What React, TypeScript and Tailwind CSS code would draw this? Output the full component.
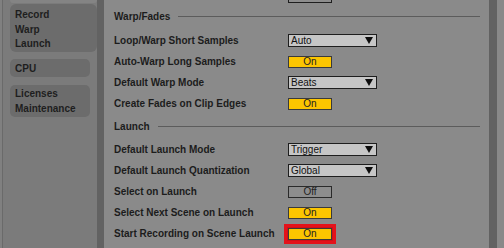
import React from 'react';

const font = { fontFamily: '"Liberation Sans", Arial, sans-serif' };

function Dropdown({ value }: { value: string }) {
  return (
    <div className="w-[89px] h-[13px] bg-[#c6c6c6] border border-[#1e1e1e] flex items-center justify-between pl-[2px] pr-[3px] text-[10px] leading-none text-[#111]">
      <span>{value}</span>
      <svg width="8" height="7" viewBox="0 0 8 7">
        <path d="M0 0 H8 L4 7 Z" fill="#0d0d0d" />
      </svg>
    </div>
  );
}

function Toggle({ on, highlight }: { on: boolean; highlight?: boolean }) {
  const box = (
    <div
      className={
        on
          ? 'w-[44px] h-[12px] bg-[#fcc500] border border-[#3a3a3a] flex items-center justify-center text-[10px] leading-none text-[#222]'
          : 'w-[44px] h-[12px] bg-[#8d8d8d] border border-[#2a2a2a] flex items-center justify-center text-[10px] leading-none text-[#222]'
      }
    >
      {on ? 'On' : 'Off'}
    </div>
  );
  if (!highlight) return box;
  return <div className="-ml-[4px] border-[3px] border-[#e4121a] p-[1px] bg-[#d01018]">{box}</div>;
}

function Row({ label, children }: { label: string; children: React.ReactNode }) {
  return (
    <div className="h-[21px] flex items-center">
      <div className="w-[174px] text-[10px] font-bold text-[#1c1c1c]">{label}</div>
      {children}
    </div>
  );
}

function Header({ title }: { title: string }) {
  return (
    <div className="h-[20px] flex items-center gap-[8px]">
      <span className="text-[10px] font-bold text-[#1c1c1c]">{title}</span>
      <div className="flex-1 h-[1px] bg-[#5c5c5c]" />
    </div>
  );
}

export default function App() {
  return (
    <div className="w-[504px] h-[248px] flex overflow-hidden bg-[#8a8a8a]" style={font}>
      {/* sidebar */}
      <div className="w-[97px] h-full bg-[#7b7b7b] flex">
        <div className="w-[2px] h-full bg-[#808080]" />
        <div className="w-[1px] h-full bg-[#6a6a6a]" />
        <div className="flex flex-col pl-[7px] text-[10px] font-bold text-[#1e1e1e]">
          <div className="h-[3px] w-[87px] bg-[#848484] rounded-b-[5px]" />
          <div className="mt-[1px] h-[48px] w-[87px] bg-[#6c6c6c] rounded-[6px] pt-[4px] pl-[5px] leading-[14.5px]">
            <div>Record</div>
            <div>Warp</div>
            <div>Launch</div>
          </div>
          <div className="mt-[7px] h-[18px] w-[80px] bg-[#6c6c6c] rounded-[5px] pl-[5px] flex items-center">CPU</div>
          <div className="mt-[8px] h-[32px] w-[80px] bg-[#6c6c6c] rounded-[5px] pt-[2px] pl-[5px] leading-[14.5px]">
            <div>Licenses</div>
            <div>Maintenance</div>
          </div>
        </div>
      </div>
      <div className="w-[7px] h-full bg-[#626262]" />

      {/* main */}
      <div className="w-[385px] h-full bg-[#8a8a8a] pl-[10px] pr-[9px] flex flex-col">
        <div className="h-[3px] flex">
          <div className="ml-[174px] w-[44px] h-[3px] border border-t-0 border-[#1e1e1e] bg-[#8d8d8d]" />
        </div>
        <div className="mt-[3px]">
          <Header title="Warp/Fades" />
        </div>
        <div className="mt-[4px]">
          <Row label="Loop/Warp Short Samples"><Dropdown value="Auto" /></Row>
          <Row label="Auto-Warp Long Samples"><Toggle on /></Row>
          <Row label="Default Warp Mode"><Dropdown value="Beats" /></Row>
          <Row label="Create Fades on Clip Edges"><Toggle on /></Row>
        </div>
        <div className="mt-[2px]">
          <Header title="Launch" />
        </div>
        <div className="mt-[3px]">
          <Row label="Default Launch Mode"><Dropdown value="Trigger" /></Row>
          <Row label="Default Launch Quantization"><Dropdown value="Global" /></Row>
          <Row label="Select on Launch"><Toggle on={false} /></Row>
          <Row label="Select Next Scene on Launch"><Toggle on /></Row>
          <Row label="Start Recording on Scene Launch"><Toggle on highlight /></Row>
        </div>
      </div>

      <div className="w-[8px] h-full bg-[#626262]" />
      <div className="flex-1 h-full bg-[#898989]" />
    </div>
  );
}
